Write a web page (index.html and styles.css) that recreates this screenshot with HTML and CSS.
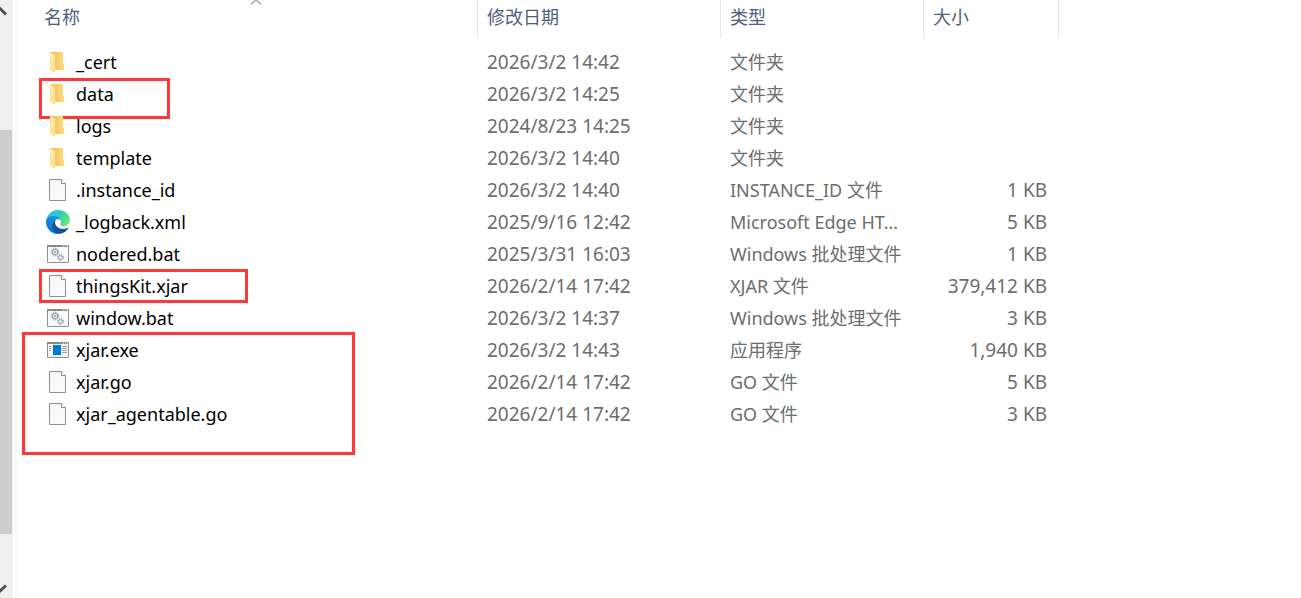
FILE: index.html
```html
<!DOCTYPE html>
<html lang="zh-CN">

<head>
  <meta charset="utf-8">
  <title>文件列表</title>
  <link rel="stylesheet" href="styles.css">
</head>

<body>
  <svg class="sprite" aria-hidden="true">
    <defs>
      <linearGradient id="folder-back" x1="0" x2="1" y1="0" y2="0">
        <stop offset="0" stop-color="#e9bf59" />
        <stop offset="1" stop-color="#fcdb82" />
      </linearGradient>
      <linearGradient id="folder-front" x1="0" x2="0" y1="0" y2="1">
        <stop offset="0" stop-color="#ffebaa" />
        <stop offset="1" stop-color="#ffe08c" />
      </linearGradient>
      <linearGradient id="paper" x1="0" x2="1" y1="0" y2="1">
        <stop offset="0" stop-color="#f4f6f7" />
        <stop offset="1" stop-color="#fdfdfe" />
      </linearGradient>
      <linearGradient id="edge-dark" x1="0" x2="1" y1="0" y2="0">
        <stop offset="0" stop-color="#0c59a4" />
        <stop offset="1" stop-color="#114a8b" />
      </linearGradient>
      <linearGradient id="edge-blue" x1=".7" x2=".3" y1="0" y2="1">
        <stop offset="0" stop-color="#1b9de2" />
        <stop offset=".5" stop-color="#1480d6" />
        <stop offset="1" stop-color="#0867c2" />
      </linearGradient>
      <linearGradient id="edge-green" x1="0" x2="1" y1=".2" y2=".6">
        <stop offset="0" stop-color="#35c1f1" />
        <stop offset=".5" stop-color="#2fc8c0" />
        <stop offset="1" stop-color="#66eb6e" />
      </linearGradient>
    </defs>

    <symbol id="folder" viewBox="0 0 24 24">
      <path d="M4 2h13v12h1v6H7L4 17z" fill="url(#folder-back)" />
      <path d="M4 2l5 3v18l-5-3z" fill="url(#folder-front)" />
    </symbol>

    <symbol id="file" viewBox="0 0 24 24">
      <path d="M3.5 1.5h12l4 4v17h-16z" fill="url(#paper)" stroke="#8d8f91" />
      <path d="M15.5 1.5v4h4" fill="#fff" stroke="#8d8f91" />
    </symbol>

    <symbol id="edge" viewBox="0 0 256 256">
      <path d="M231 190.5a94 94 0 0 1-10.500 4.700 102 102 0 0 1-36 6.500c-47.300 0-88.500-32.600-88.500-74.300a31.500 31.500 0 0 1 16.400-27.300c-42.800 1.800-53.800 46.400-53.800 72.500 0 73.900 68.100 81.400 82.800 81.400 7.900 0 19.800-2.300 27-4.600l1.300-.4a128 128 0 0 0 66.600-52.900 4 4 0 0 0-5.300-5.600z" fill="url(#edge-dark)" />
      <path d="M105.700 241.400A79.200 79.200 0 0 1 83 220.100a80.700 80.700 0 0 1 29.500-120.800c3.100-1.500 8.500-4.100 15.500-4a32.400 32.400 0 0 1 25.700 13 31.900 31.900 0 0 1 6.300 18.700c0-.2 24.500-79.600-80-79.600-43.900 0-80 41.700-80 78.200a130 130 0 0 0 12.100 56 128 128 0 0 0 156.400 67.100 75.600 75.600 0 0 1-62.800-8z" fill="url(#edge-blue)" />
      <path d="M152.300 148.900c-.8 1-3.300 2.500-3.300 5.600 0 2.600 1.700 5.100 4.700 7.200 14.400 10 41.500 8.700 41.600 8.700a59.600 59.600 0 0 0 30.300-8.300 61.400 61.400 0 0 0 30.400-52.900c.3-22.400-8-37.300-11.300-43.900C223.500 23.800 177.700 0 128 0A128 128 0 0 0 0 126.200c.5-36.500 36.800-66 80-66 3.500 0 23.500.3 42 10 16.300 8.600 24.900 19 30.800 29.200 6.200 10.700 7.300 24.200 7.300 29.500s-2.700 13.400-7.800 20z" fill="url(#edge-green)" />
    </symbol>

    <symbol id="batch" viewBox="0 0 24 24">
      <path d="M1.500 3.500h21v17h-21z" fill="#f7f9fa" stroke="#8d9194" />
      <path d="M1 3h22v2H1z" fill="#858b90" />
      <path d="M17 4h1m1 0h1m1 0h1" stroke="#fff" />
      <g fill="none" stroke="#8c9ba5">
        <circle cx="9" cy="10" r="3.800" stroke-dasharray="1.500 1" />
        <circle cx="9" cy="10" r="2.800" />
        <circle cx="9" cy="10" r="1" />
        <circle cx="14.500" cy="15.500" r="2.900" stroke-dasharray="1.300 1" />
        <circle cx="14.500" cy="15.500" r="2" />
      </g>
    </symbol>

    <symbol id="program" viewBox="0 0 24 24">
      <path d="M1.500 4.500h21v15h-21z" fill="#f5f5f5" stroke="#8d9194" />
      <path d="M1 4h22v2H1z" fill="#858b90" />
      <path d="M17 5h1m1 0h1m1 0h1" stroke="#fff" />
      <path d="M7 7h8v10H7z" fill="#0078d7" />
      <path d="M3 8.500h2m-2 2h2m-2 2h2M16 8.500h5m-5 2h5m-5 2h5m-5 2h5" stroke="#a0a0a0" />
    </symbol>
  </svg>

  <div class="explorer">
    <div class="scrollbar">
      <svg class="arrow" viewBox="0 0 13 16"><path d="M-6 14L0 8.500L6 14.500" /></svg>
      <div class="track">
        <div class="thumb"></div>
      </div>
      <svg class="arrow" viewBox="0 0 13 16"><path d="M-6 3L0 9L6 3.500" /></svg>
    </div>

    <main class="content">
      <table class="files">
        <colgroup>
          <col class="col-name">
          <col class="col-date">
          <col class="col-type">
          <col class="col-size">
          <col>
        </colgroup>
        <thead>
          <tr>
            <th>
              <button>名称</button>
              <svg class="sort" viewBox="0 0 12 5"><path d="M1 4.500L6 -.5L11 4.500" /></svg>
            </th>
            <th><button>修改日期</button></th>
            <th><button>类型</button></th>
            <th><button>大小</button></th>
            <td></td>
          </tr>
        </thead>
        <tbody>
          <tr>
            <td class="name"><svg class="icon"><use href="#folder" /></svg>_cert</td>
            <td class="date">2026/3/2 14:42</td>
            <td>文件夹</td>
            <td class="size"></td>
          </tr>
          <tr>
            <td class="name"><svg class="icon"><use href="#folder" /></svg>data<div class="mark mark-data"></div></td>
            <td class="date">2026/3/2 14:25</td>
            <td>文件夹</td>
            <td class="size"></td>
          </tr>
          <tr>
            <td class="name"><svg class="icon"><use href="#folder" /></svg>logs</td>
            <td class="date">2024/8/23 14:25</td>
            <td>文件夹</td>
            <td class="size"></td>
          </tr>
          <tr>
            <td class="name"><svg class="icon"><use href="#folder" /></svg>template</td>
            <td class="date">2026/3/2 14:40</td>
            <td>文件夹</td>
            <td class="size"></td>
          </tr>
          <tr>
            <td class="name"><svg class="icon"><use href="#file" /></svg>.instance_id</td>
            <td class="date">2026/3/2 14:40</td>
            <td>INSTANCE_ID 文件</td>
            <td class="size">1 KB</td>
          </tr>
          <tr>
            <td class="name"><svg class="icon"><use href="#edge" /></svg>_logback.xml</td>
            <td class="date">2025/9/16 12:42</td>
            <td>Microsoft Edge HT...</td>
            <td class="size">5 KB</td>
          </tr>
          <tr>
            <td class="name"><svg class="icon"><use href="#batch" /></svg>nodered.bat</td>
            <td class="date">2025/3/31 16:03</td>
            <td>Windows 批处理文件</td>
            <td class="size">1 KB</td>
          </tr>
          <tr>
            <td class="name"><svg class="icon"><use href="#file" /></svg>thingsKit.xjar<div class="mark mark-kit"></div></td>
            <td class="date">2026/2/14 17:42</td>
            <td>XJAR 文件</td>
            <td class="size">379,412 KB</td>
          </tr>
          <tr>
            <td class="name"><svg class="icon"><use href="#batch" /></svg>window.bat</td>
            <td class="date">2026/3/2 14:37</td>
            <td>Windows 批处理文件</td>
            <td class="size">3 KB</td>
          </tr>
          <tr>
            <td class="name"><svg class="icon"><use href="#program" /></svg>xjar.exe<div class="mark mark-xjar"></div></td>
            <td class="date">2026/3/2 14:43</td>
            <td>应用程序</td>
            <td class="size">1,940 KB</td>
          </tr>
          <tr>
            <td class="name"><svg class="icon"><use href="#file" /></svg>xjar.go</td>
            <td class="date">2026/2/14 17:42</td>
            <td>GO 文件</td>
            <td class="size">5 KB</td>
          </tr>
          <tr>
            <td class="name"><svg class="icon"><use href="#file" /></svg>xjar_agentable.go</td>
            <td class="date">2026/2/14 17:42</td>
            <td>GO 文件</td>
            <td class="size">3 KB</td>
          </tr>
        </tbody>
      </table>
    </main>
  </div>
</body>

</html>
```
FILE: styles.css
```css
body {
  margin: 0;
  background: #fff;
  color: #6d6d6d;
  font-family: "Noto Sans", "Noto Sans CJK SC", sans-serif;
  font-size: 18px;
}

.sprite {
  position: absolute;
  width: 0;
  height: 0;
}

.explorer {
  display: flex;
  min-height: 100vh;
}

/* scrollbar of the side pane */
.scrollbar {
  display: flex;
  flex-direction: column;
  width: 13px;
  background: #f0f0f0;
}

.arrow {
  width: 13px;
  height: 16px;
  fill: none;
  stroke: #505050;
  stroke-width: 3;
}

.track {
  flex: 1;
  display: flex;
  flex-direction: column;
  padding: 114px 1px 48px 0;
}

.thumb {
  flex: 1;
  background: #cdcdcd;
}

.content {
  flex: 1;
  margin-left: 2px;
  border-left: 2px solid #f7f7f7;
}

/* file list */
.files {
  width: 100%;
  table-layout: fixed;
  border-collapse: separate;
  border-spacing: 0;
}

.col-name {
  width: 461px;
}

.col-date {
  width: 243px;
}

.col-type {
  width: 203px;
}

.col-size {
  width: 135px;
}

.files th {
  position: relative;
  height: 38px;
  padding: 0 0 0 9px;
  border-right: 1px solid #e5e5e5;
  box-sizing: border-box;
  text-align: left;
}

.files th:first-child {
  padding-left: 27px;
}

.files button {
  display: block;
  padding: 0 0 4px;
  border: none;
  background: none;
  color: #4c607a;
  font-family: inherit;
  font-size: 18px;
  line-height: 24px;
}

.sort {
  position: absolute;
  top: 0;
  left: 233px;
  width: 12px;
  height: 5px;
  fill: none;
  stroke: #555;
}

.files tbody::before {
  content: "";
  display: block;
  height: 8px;
}

.files tbody td {
  height: 32px;
  padding: 0 0 0 9px;
  box-sizing: border-box;
  line-height: 24px;
  white-space: nowrap;
}

.files tbody .name {
  position: relative;
  padding-left: 29px;
  color: #000;
}

.files tbody .date {
  font-size: 19px;
}

.files tbody .size {
  padding-right: 12px;
  font-size: 19px;
  text-align: right;
}

.icon {
  width: 24px;
  height: 24px;
  margin-right: 6px;
  vertical-align: -5px;
}

/* red frames around the important files */
.mark {
  position: absolute;
  box-sizing: border-box;
  border: 3px solid #fc3838;
}

.mark-data {
  top: 0;
  left: 22px;
  width: 131px;
  height: 41px;
}

.mark-kit {
  top: -1px;
  left: 22px;
  width: 209px;
  height: 34px;
}

.mark-xjar {
  top: -2px;
  left: 5px;
  width: 333px;
  height: 123px;
}
```
